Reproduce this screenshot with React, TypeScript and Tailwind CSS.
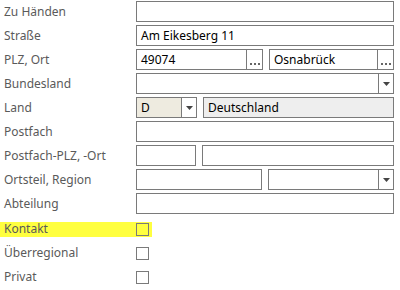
const field = 'h-[21px] border border-[#7a7a7a] flex items-center text-[12px] text-black'

function Caret() {
  return (
    <div className="w-[15px] h-full border-l border-[#7a7a7a] bg-white flex items-center justify-center">
      <svg width="7" height="4" viewBox="0 0 7 4">
        <path d="M0 0h7L3.5 4z" fill="#444" />
      </svg>
    </div>
  )
}

function Dots() {
  return (
    <div className="w-[16px] h-full border-l border-[#7a7a7a] flex items-end justify-center gap-[2px] pb-[4px]">
      <span className="w-[2px] h-[2px] bg-[#666]" />
      <span className="w-[2px] h-[2px] bg-[#666]" />
      <span className="w-[2px] h-[2px] bg-[#666]" />
    </div>
  )
}

function Row({ label, children }: { label: string; children?: React.ReactNode }) {
  return (
    <div className="h-[24px] flex items-start">
      <div className="w-[136px] h-[21px] flex items-center pl-[4px] text-[12px] text-[#5a5a5a]">{label}</div>
      <div className="flex-1 flex gap-[6px] pr-[6px]">{children}</div>
    </div>
  )
}

function CheckRow({ label, highlight }: { label: string; highlight?: boolean }) {
  return (
    <div className="h-[24px] flex items-center">
      <div className={`w-[152px] h-[15px] flex items-center ${highlight ? 'bg-[#ffff40]' : ''}`}>
        <span className="w-[136px] pl-[4px] text-[12px] text-[#5a5a5a]">{label}</span>
        <span className="w-[13px] h-[13px] border border-[#7a7a7a]" />
      </div>
    </div>
  )
}

export default function App() {
  return (
    <div className="w-[400px] h-[290px] bg-white pt-[1px] font-['Noto_Sans','Open_Sans',sans-serif] overflow-hidden">
      <Row label="Zu Händen">
        <div className={`${field} flex-1 bg-white`} />
      </Row>
      <Row label="Straße">
        <div className={`${field} flex-1 bg-white px-[4px]`}>Am Eikesberg 11</div>
      </Row>
      <Row label="PLZ, Ort">
        <div className={`${field} w-[127px] bg-white`}>
          <span className="flex-1 px-[4px]">49074</span>
          <Dots />
        </div>
        <div className={`${field} flex-1 bg-white`}>
          <span className="flex-1 px-[4px]">Osnabrück</span>
          <Dots />
        </div>
      </Row>
      <Row label="Bundesland">
        <div className={`${field} flex-1 bg-white`}>
          <span className="flex-1" />
          <Caret />
        </div>
      </Row>
      <Row label="Land">
        <div className={`${field} w-[61px] bg-[#eeebe0]`}>
          <span className="flex-1 px-[4px]">D</span>
          <Caret />
        </div>
        <div className={`${field} flex-1 bg-[#eeeeee] px-[4px]`}>Deutschland</div>
      </Row>
      <Row label="Postfach">
        <div className={`${field} flex-1 bg-white`} />
      </Row>
      <Row label="Postfach-PLZ, -Ort">
        <div className={`${field} w-[60px] bg-white`} />
        <div className={`${field} flex-1 bg-white`} />
      </Row>
      <Row label="Ortsteil, Region">
        <div className={`${field} w-[126px] bg-white`} />
        <div className={`${field} flex-1 bg-white`}>
          <span className="flex-1" />
          <Caret />
        </div>
      </Row>
      <Row label="Abteilung">
        <div className={`${field} flex-1 bg-white`} />
      </Row>
      <CheckRow label="Kontakt" highlight />
      <CheckRow label="Überregional" />
      <CheckRow label="Privat" />
    </div>
  )
}
